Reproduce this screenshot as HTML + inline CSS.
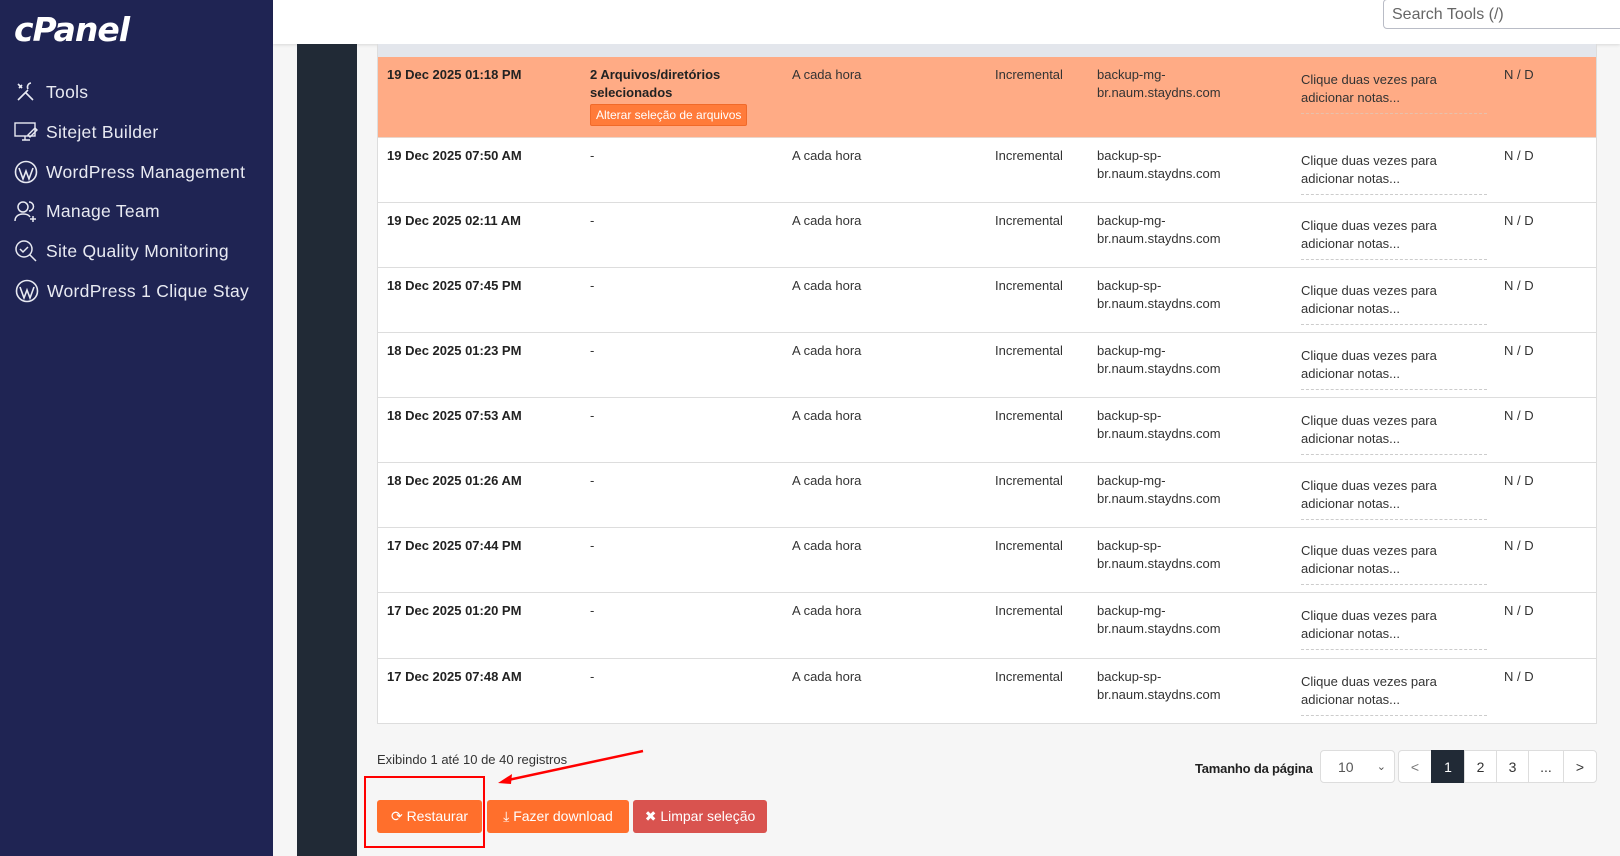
<!DOCTYPE html>
<html><head><meta charset="utf-8"><style>
*{box-sizing:border-box;margin:0;padding:0}
body{width:1620px;height:856px;overflow:hidden;background:#f6f6f6;font-family:"Liberation Sans",sans-serif;position:relative;color:#222}
.sb{position:absolute;left:0;top:0;width:273px;height:856px;background:#1f2453;color:#e8eaf2}
.logo{position:absolute;left:14px;top:10px;font-size:33px;font-weight:bold;font-style:italic;color:#fff;letter-spacing:-1px;font-family:"DejaVu Sans",sans-serif}
.mi{position:absolute;left:14px;font-family:"Liberation Sans",sans-serif;font-size:17.5px;letter-spacing:.3px;display:flex;align-items:center;gap:8px;height:26px}
.mi svg{width:24px;height:24px}
.hdr{position:absolute;left:273px;top:0;width:1347px;height:44px;background:#fff;box-shadow:0 1px 3px rgba(0,0,0,.12)}
.search{position:absolute;left:1383px;top:-1px;width:250px;height:30px;border:1px solid #b9bcc6;border-radius:4px;background:#fff;font-family:"Liberation Sans",sans-serif;font-size:16px;color:#666;padding:6px 8px}
.dark{position:absolute;left:297px;top:44px;width:60px;height:812px;background:#212a36}
.tbl{position:absolute;left:377px;top:44px;width:1220px;height:680px;background:#fff;border:1px solid #ddd;border-top:none}
.bar{position:absolute;left:0;top:0;width:100%;height:13px;background:#e3e6ec}
.row{position:absolute;left:0;width:100%;border-bottom:1px solid #ddd;font-size:13px;color:#333}
.row span{position:absolute;top:9px;line-height:18px}
.b{font-weight:bold;color:#222}
.note{border-bottom:1px dashed #ccc;width:186px;padding-bottom:6px;top:14px!important}
.alt{display:inline-block;background:#ff7b3a;border:1px solid #f06a2a;color:#fff;font-size:12px;font-weight:normal;padding:1px 5px;border-radius:2px;margin-top:2px;line-height:16px}
.btn{position:absolute;top:800px;height:33px;color:#fff;font-size:14px;display:flex;align-items:center;justify-content:center;border-radius:3px}
.pg{position:absolute;top:750px;height:33px;border:1px solid #ddd;background:#fff;font-size:14px;display:flex;align-items:center;justify-content:center;color:#333}
</style></head><body>
<div class="sb">
<div class="logo">cPanel</div>
<div class="mi" style="top:79px"><svg viewBox="0 0 24 24" fill="none" stroke="#e8eaf2" stroke-width="1.6"><path d="M4 20L14 10M17 3a4 4 0 0 0-3 6M4 4l4 4M8 5l-3 3M12 13l7 7"/></svg>Tools</div>
<div class="mi" style="top:119px"><svg viewBox="0 0 24 24" fill="none" stroke="#e8eaf2" stroke-width="1.4"><rect x="1" y="3" width="20" height="13"/><path d="M8 20h8M11 16v4M14 15l7-7 2 2-7 7z"/></svg>Sitejet Builder</div>
<div class="mi" style="top:159px"><svg viewBox="0 0 24 24" fill="none" stroke="#e8eaf2" stroke-width="1.6"><circle cx="12" cy="12" r="10.5"/><path d="M5 8l4 11 3-8 3 8 4-11" /></svg>WordPress Management</div>
<div class="mi" style="top:198px"><svg viewBox="0 0 24 24" fill="none" stroke="#e8eaf2" stroke-width="1.5"><circle cx="9" cy="8" r="5"/><path d="M1 22c0-5 4-7 8-7s6 1 7 3M15 3a4 4 0 0 1 0 9M19 17v6M16 20h6"/></svg>Manage Team</div>
<div class="mi" style="top:238px"><svg viewBox="0 0 24 24" fill="none" stroke="#e8eaf2" stroke-width="1.5"><circle cx="10" cy="10" r="8"/><path d="M6 10l3 3 5-5M16 16l6 6"/></svg>Site Quality Monitoring</div>
<div class="mi" style="top:278px;left:15px"><svg viewBox="0 0 24 24" fill="none" stroke="#e8eaf2" stroke-width="1.6"><circle cx="12" cy="12" r="10.5"/><path d="M5 8l4 11 3-8 3 8 4-11"/></svg>WordPress 1 Clique Stay</div>
</div>
<div class="hdr"></div>
<div class="search">Search Tools (/)</div>
<div class="dark"></div>
<div class="tbl">
<div class="bar"></div>
<div class="row" style="top:13px;height:81px;background:#ffab85;border-bottom-color:#e9d6cc">
<span class="b" style="left:9px">19 Dec 2025 01:18 PM</span>
<span class="b" style="left:212px">2 Arquivos/diretórios<br>selecionados<br><span class="alt" style="position:static">Alterar seleção de arquivos</span></span>
<span style="left:414px">A cada hora</span><span style="left:617px">Incremental</span>
<span style="left:719px">backup-mg-<br>br.naum.staydns.com</span>
<span class="note" style="left:923px;border-color:#e6c1ad">Clique duas vezes para<br>adicionar notas...</span>
<span style="left:1126px">N / D</span></div>
<div class="row" style="top:94px;height:65px"><span class="b" style="left:9px">19 Dec 2025 07:50 AM</span><span style="left:212px">-</span><span style="left:414px">A cada hora</span><span style="left:617px">Incremental</span><span style="left:719px">backup-sp-<br>br.naum.staydns.com</span><span class="note" style="left:923px">Clique duas vezes para<br>adicionar notas...</span><span style="left:1126px">N / D</span></div>
<div class="row" style="top:159px;height:65px"><span class="b" style="left:9px">19 Dec 2025 02:11 AM</span><span style="left:212px">-</span><span style="left:414px">A cada hora</span><span style="left:617px">Incremental</span><span style="left:719px">backup-mg-<br>br.naum.staydns.com</span><span class="note" style="left:923px">Clique duas vezes para<br>adicionar notas...</span><span style="left:1126px">N / D</span></div>
<div class="row" style="top:224px;height:65px"><span class="b" style="left:9px">18 Dec 2025 07:45 PM</span><span style="left:212px">-</span><span style="left:414px">A cada hora</span><span style="left:617px">Incremental</span><span style="left:719px">backup-sp-<br>br.naum.staydns.com</span><span class="note" style="left:923px">Clique duas vezes para<br>adicionar notas...</span><span style="left:1126px">N / D</span></div>
<div class="row" style="top:289px;height:65px"><span class="b" style="left:9px">18 Dec 2025 01:23 PM</span><span style="left:212px">-</span><span style="left:414px">A cada hora</span><span style="left:617px">Incremental</span><span style="left:719px">backup-mg-<br>br.naum.staydns.com</span><span class="note" style="left:923px">Clique duas vezes para<br>adicionar notas...</span><span style="left:1126px">N / D</span></div>
<div class="row" style="top:354px;height:65px"><span class="b" style="left:9px">18 Dec 2025 07:53 AM</span><span style="left:212px">-</span><span style="left:414px">A cada hora</span><span style="left:617px">Incremental</span><span style="left:719px">backup-sp-<br>br.naum.staydns.com</span><span class="note" style="left:923px">Clique duas vezes para<br>adicionar notas...</span><span style="left:1126px">N / D</span></div>
<div class="row" style="top:419px;height:65px"><span class="b" style="left:9px">18 Dec 2025 01:26 AM</span><span style="left:212px">-</span><span style="left:414px">A cada hora</span><span style="left:617px">Incremental</span><span style="left:719px">backup-mg-<br>br.naum.staydns.com</span><span class="note" style="left:923px">Clique duas vezes para<br>adicionar notas...</span><span style="left:1126px">N / D</span></div>
<div class="row" style="top:484px;height:65px"><span class="b" style="left:9px">17 Dec 2025 07:44 PM</span><span style="left:212px">-</span><span style="left:414px">A cada hora</span><span style="left:617px">Incremental</span><span style="left:719px">backup-sp-<br>br.naum.staydns.com</span><span class="note" style="left:923px">Clique duas vezes para<br>adicionar notas...</span><span style="left:1126px">N / D</span></div>
<div class="row" style="top:549px;height:66px"><span class="b" style="left:9px">17 Dec 2025 01:20 PM</span><span style="left:212px">-</span><span style="left:414px">A cada hora</span><span style="left:617px">Incremental</span><span style="left:719px">backup-mg-<br>br.naum.staydns.com</span><span class="note" style="left:923px">Clique duas vezes para<br>adicionar notas...</span><span style="left:1126px">N / D</span></div>
<div class="row" style="top:615px;height:65px;border-bottom:none"><span class="b" style="left:9px">17 Dec 2025 07:48 AM</span><span style="left:212px">-</span><span style="left:414px">A cada hora</span><span style="left:617px">Incremental</span><span style="left:719px">backup-sp-<br>br.naum.staydns.com</span><span class="note" style="left:923px">Clique duas vezes para<br>adicionar notas...</span><span style="left:1126px">N / D</span></div>
</div>
<div style="position:absolute;left:377px;top:752px;font-size:13px;color:#333">Exibindo 1 até 10 de 40 registros</div>
<div style="position:absolute;left:1195px;top:761px;font-size:13px;font-weight:bold;color:#222;letter-spacing:-.2px">Tamanho da página</div>
<div class="pg" style="left:1320px;width:75px;justify-content:space-between;padding:0 8px 0 17px;border-radius:4px;color:#555"><span>10</span><span style="font-size:11px">&#8964;</span></div>
<div class="pg" style="left:1398px;width:34px;border-radius:4px 0 0 4px;color:#777">&lt;</div>
<div class="pg" style="left:1431px;width:34px;background:#212a36;border-color:#212a36;color:#fff">1</div>
<div class="pg" style="left:1464px;width:33px">2</div>
<div class="pg" style="left:1496px;width:33px">3</div>
<div class="pg" style="left:1528px;width:36px">...</div>
<div class="pg" style="left:1563px;width:34px;border-radius:0 4px 4px 0">&gt;</div>
<div class="btn" style="left:377px;width:105px;background:#ff6f2c">&#10227; Restaurar</div>
<div class="btn" style="left:487px;width:142px;background:#ff6f2c">&#10515; Fazer download</div>
<div class="btn" style="left:633px;width:134px;background:#d9534f">&#10006; Limpar seleção</div>
<div style="position:absolute;left:364px;top:776px;width:121px;height:72px;border:2px solid #f00"></div>
<svg style="position:absolute;left:0;top:0" width="1620" height="856"><path d="M643 751L508 780" stroke="#f00" stroke-width="2.5"/><path d="M498 783l14-9-1 10z" fill="#f00"/></svg>
</body></html>
